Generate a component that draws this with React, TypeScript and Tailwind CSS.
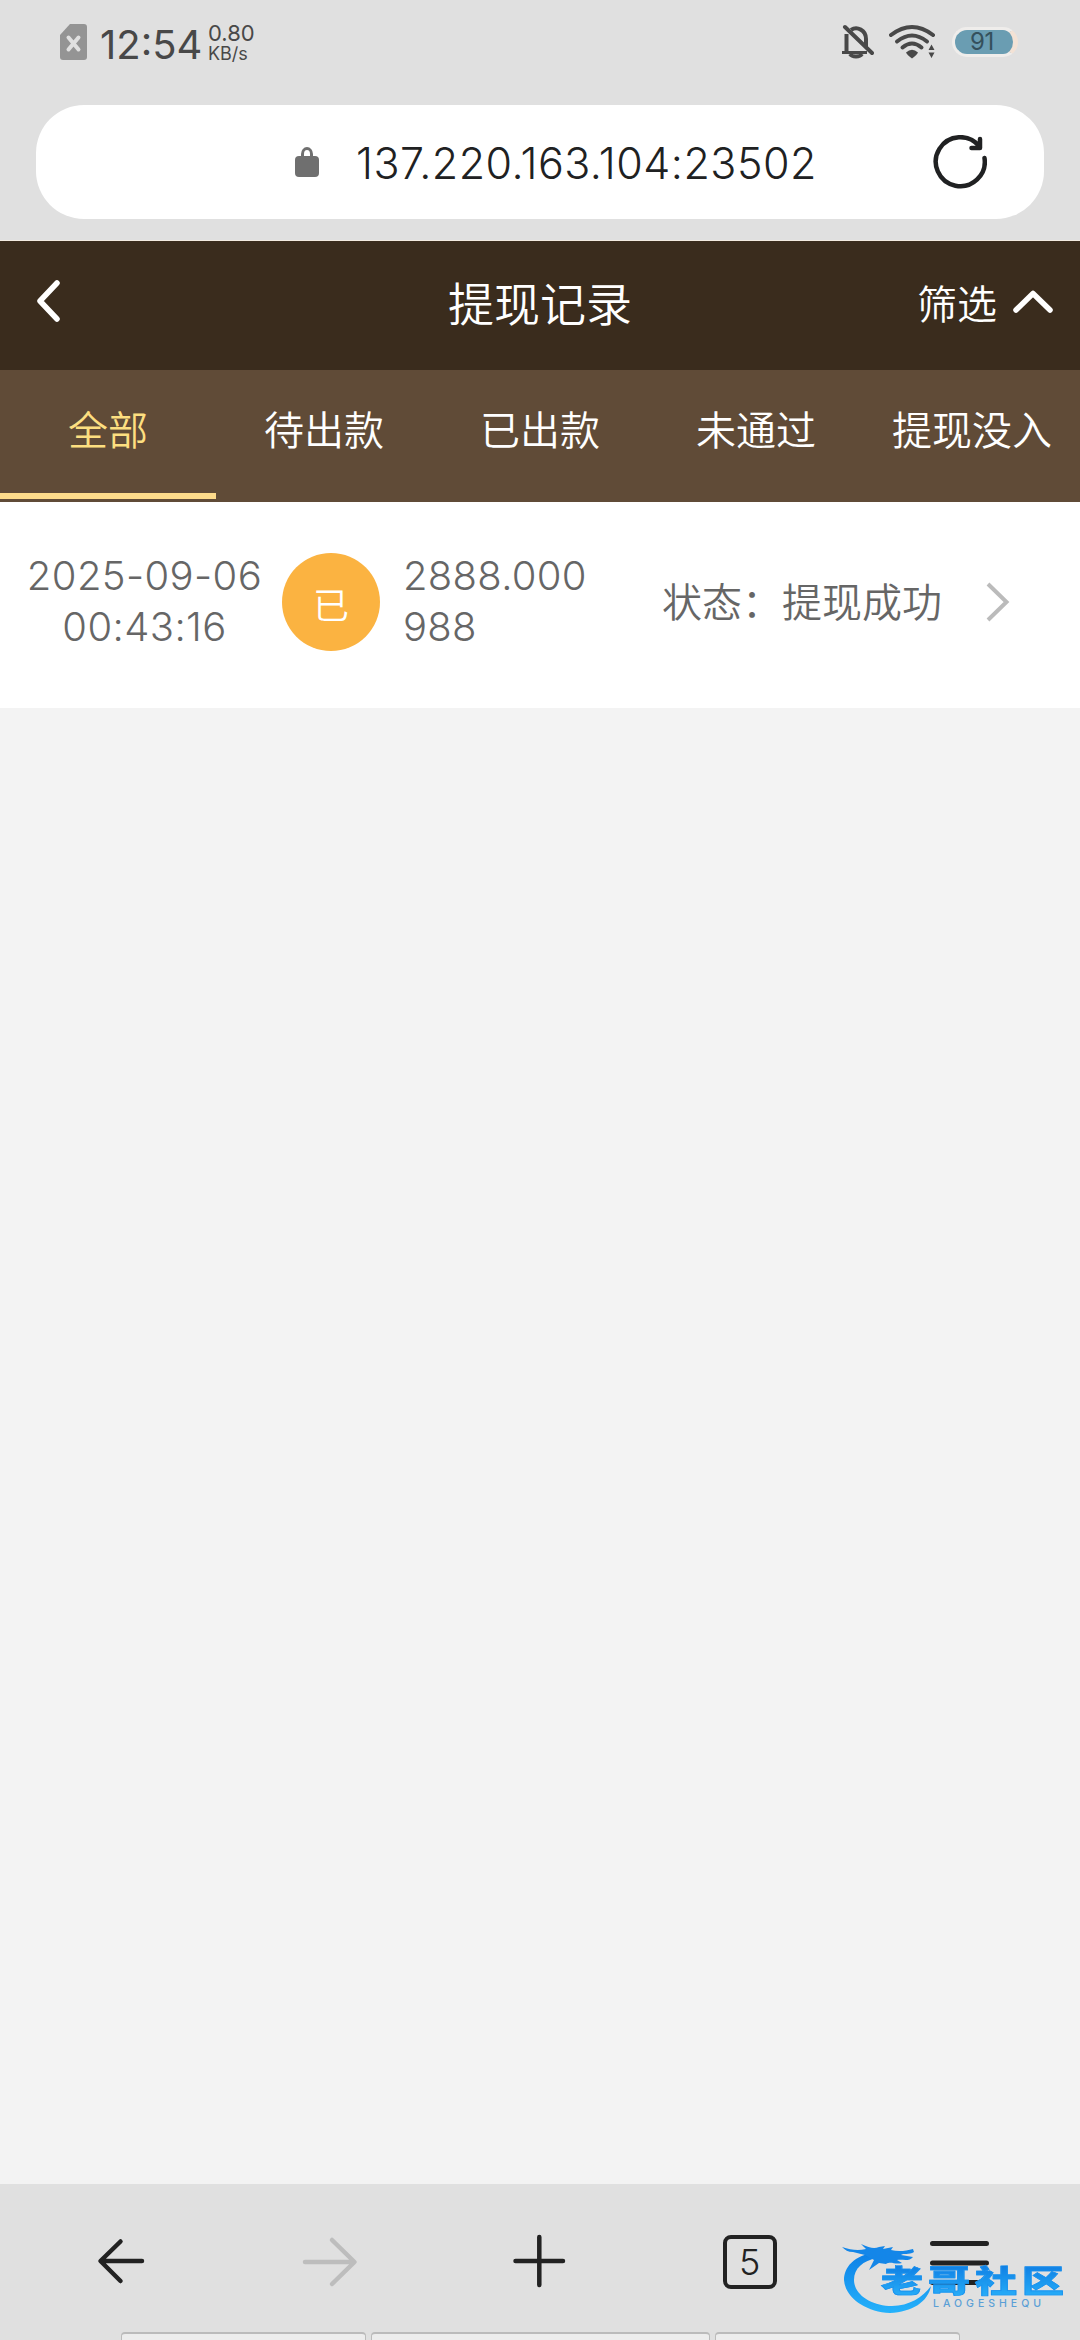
import clsx from "clsx";

const tabs = ["全部", "待出款", "已出款", "未通过", "提现没入"];

function StatusBar() {
  return (
    <div className="flex h-[105px] items-start justify-between pl-[60px] pr-[62px] text-[#484848]">
      <div className="flex items-start">
        {/* missing sim card */}
        <svg className="mt-6" width="27" height="36" viewBox="0 0 27 36">
          <path d="M10 0H24a3 3 0 0 1 3 3V33a3 3 0 0 1-3 3H3a3 3 0 0 1-3-3V11Z" fill="#949494" />
          <path d="M8.5 13.5L18.5 25.5M18.5 13.5L8.5 25.5" stroke="#e0e0e0" strokeWidth="4" strokeLinecap="round" />
        </svg>
        <span className="ml-[13px] mt-[21px] w-[108px] text-[40px] leading-[48px] whitespace-nowrap">12:54</span>
        <div className="mt-[22px] flex flex-col">
          <span className="text-[22px] leading-[23px]">0.80</span>
          <span className="text-[18px] leading-[18px]">KB/s</span>
        </div>
      </div>
      <div className="flex items-start">
        <svg className="mt-6" width="32" height="37" viewBox="0 0 32 37" fill="none" stroke="currentColor" strokeWidth="4">
          <path d="M4.5 10V28M9 6C15 2 24 6 24 15V23" />
          <path d="M0 28.5H25" strokeWidth="3" />
          <path d="M8 30a6.5 4 0 0 0 12 0" />
          <path d="M3 3L30 29" strokeLinecap="round" />
        </svg>
        <svg className="ml-[15px] mt-6" width="48" height="36" viewBox="0 0 48 36" fill="none" stroke="currentColor" strokeWidth="4" strokeLinecap="round">
          <path d="M2 11Q23 -5 44 11" />
          <path d="M8 17.5Q23 5.5 38 17.5" />
          <path d="M13.5 23.5Q23 15.5 32.5 23.5" />
          <path d="M17 28.5Q23 23 29 28.5Q28 31 23 34.5Q18 31 17 28.5Z" fill="currentColor" stroke="none" />
          <path d="M39.5 26L42.5 20.5L45.5 26ZM39.5 28.5L42.5 34L45.5 28.5Z" fill="currentColor" stroke="none" />
        </svg>
        <div className="ml-[15px] mt-[27px] flex h-[30px] w-[66px] items-center rounded-full border-[3px] border-[#efedeb] border-r-[5px] border-r-[#f3e2d5] bg-[#6a9db2] pl-[15px] text-[24px] tracking-[-0.5px] text-[#34505c]">
          91
        </div>
      </div>
    </div>
  );
}

function AddressBar() {
  return (
    <div className="mx-9 flex h-[114px] items-center rounded-[48px] bg-white">
      <svg className="ml-[259px]" width="24" height="30" viewBox="0 0 24 30">
        <path d="M7.5 11V7a4.5 5.5 0 0 1 9 0V11" fill="none" stroke="#6f6f6f" strokeWidth="3" />
        <rect y="9" width="24" height="21" rx="4" fill="#6f6f6f" />
      </svg>
      <span className="ml-[37px] w-[577px] pt-[3px] text-[43px] font-light tracking-[0.5px] text-[#202122]">137.220.163.104:23502</span>
      <svg width="54" height="54" viewBox="0 0 54 54" fill="none" stroke="#202122" strokeWidth="4.5" strokeLinecap="round" strokeLinejoin="round">
        <path d="M51.5 23A24.5 24.5 0 1 1 46.5 11.5" />
        <path d="M47 4V13H38.5" />
      </svg>
    </div>
  );
}

function PageHeader() {
  return (
    <header className="flex h-[130px] items-center border-t border-[#f3ebe0] bg-[#3a2c1d] pb-1 text-white">
      <div className="flex w-[448px] items-center pl-[36px]">
        <svg className="mb-[6px]" width="24" height="42" viewBox="0 0 24 42" fill="none" stroke="currentColor" strokeWidth="5.5" strokeLinecap="round" strokeLinejoin="round">
          <path d="M21 3L4 21L21 39" />
        </svg>
      </div>
      <h1 className="text-[46px] leading-none font-[350]">提现记录</h1>
      <div className="flex flex-1 items-center justify-end pr-[27px] text-[40px] leading-none font-[350]">
        <span className="pt-[3px]">筛选</span>
        <svg className="mb-[3px] ml-4" width="40" height="24" viewBox="0 0 40 24" fill="none" stroke="currentColor" strokeWidth="5.5" strokeLinecap="round" strokeLinejoin="round">
          <path d="M3 20L20 3.5L37 20" />
        </svg>
      </div>
    </header>
  );
}

function Tabs() {
  return (
    <nav className="flex h-[132px] bg-[#604b37] pb-[3px] text-[40px] font-[350]">
      {tabs.map((tab, i) => (
        <div
          key={tab}
          className={clsx(
            "flex w-[216px] items-center justify-center border-b-[6px] pb-0.5 whitespace-nowrap",
            i === 0 ? "border-[#fddb8b] text-[#fddf80]" : "border-transparent text-white",
          )}
        >
          {tab}
        </div>
      ))}
    </nav>
  );
}

function Record() {
  return (
    <div className="flex h-[206px] bg-white text-[40px] leading-[51px] font-light text-[#666]">
      <div className="ml-5 mt-12 w-[249px] text-center tracking-[0.4px] whitespace-nowrap">
        2025-09-06
        <br />
        00:43:16
      </div>
      <div className="ml-[13px] mt-[51px] flex size-[98px] items-center justify-center rounded-full bg-[#fbb341] pt-2 text-[36px] font-[350] text-white">
        已
      </div>
      <div className="ml-[23px] mt-12 w-[259px] tracking-[0.3px]">
        2888.000
        <br />
        988
      </div>
      <div className="mt-[75px] w-[324px] font-[350]">状态：提现成功</div>
      <svg className="mt-[80px]" width="24" height="40" viewBox="0 0 24 40" fill="none" stroke="#bbb" strokeWidth="4">
        <path d="M2 2L20.5 20L2 38" />
      </svg>
    </div>
  );
}

// Site logo laid over the bottom right corner
function Watermark() {
  return (
    <div className="absolute top-[55px] left-[841px] h-[80px] w-[230px]">
      <svg className="absolute inset-0" width="230" height="80" viewBox="0 0 230 80">
        <defs>
          <linearGradient id="ring" x1="0" y1="0" x2="0" y2="1">
            <stop offset="0" stopColor="#0c7fe6" />
            <stop offset="1" stopColor="#25b2fb" />
          </linearGradient>
        </defs>
        <path d="M36 13C12 16 3 29 3 41C4 58 24 73 49 74C71 73 87 63 90 47C82 58 68 67 51 67C31 67 13 56 13 41C13 29 22 22 36 19Z" fill="url(#ring)" />
        <path d="M1 8C10 11 17 12 25 10L20 5C29 9 33 10 38 8L44 7L42 10L52 8L50 11C57 13 65 12 72 10L73 13C68 16 62 14 60 16L72 18C68 23 62 20 56 21L61 24C54 26 50 22 45 25L38 24L28 31L33 21L24 16L12 13C7 13 4 11 1 8Z" fill="#1486e8" />
      </svg>
      <span className="absolute top-[27px] left-[40px] origin-top scale-y-[0.72] bg-linear-to-b from-[#1180e4] to-[#27adf8] bg-clip-text text-[42px] leading-[42px] font-black tracking-[5px] whitespace-nowrap text-transparent [-webkit-text-stroke:1px_#1c92ee]">
        老哥社区
      </span>
      <span className="absolute top-[59px] left-[92px] text-[10.5px] leading-[11px] font-medium tracking-[4px] text-[#5a9fd6]">LAOGESHEQU</span>
    </div>
  );
}

function BottomBar() {
  return (
    <footer className="relative flex h-[156px] flex-col bg-[#e0e0e0] text-[#222]">
      <div className="grid h-[148px] grid-cols-5 place-items-center px-4 pt-[8px]">
        <svg width="60" height="60" viewBox="0 0 60 60" fill="none" stroke="currentColor" strokeWidth="4.5" strokeLinecap="round" strokeLinejoin="round">
          <path d="M51 29H10M29.5 9.5L9.5 29L29.5 49" />
        </svg>
        <svg className="text-[#bdbdbd]" width="60" height="60" viewBox="0 0 60 60" fill="none" stroke="currentColor" strokeWidth="4.5" strokeLinecap="round" strokeLinejoin="round">
          <path d="M5 30H54M32 8L54.5 30L32 52" />
        </svg>
        <svg width="60" height="60" viewBox="0 0 60 60" fill="none" stroke="currentColor" strokeWidth="4.5" strokeLinecap="round">
          <path d="M5.5 29H53M29.3 5V53" />
        </svg>
        <div className="flex size-[54px] items-center justify-center rounded-[8px] border-[4.5px] border-current text-[36px] font-light">5</div>
        <svg width="60" height="60" viewBox="0 0 60 60" fill="none" stroke="currentColor" strokeWidth="5" strokeLinecap="round">
          <path d="M3.5 11.5H57.5M3.5 31H57.5M3.5 50.5H57.5" />
        </svg>
      </div>
      {/* tops of the cards behind the bar */}
      <div className="flex h-2 gap-[5px] pl-[121px]">
        <div className="w-[245px] rounded-t border-x border-t-2 border-[#bbb] bg-[#ededed]" />
        <div className="w-[339px] rounded-t border-x border-t-2 border-[#bbb] bg-[#ededed]" />
        <div className="w-[245px] rounded-t border-x border-t-2 border-[#bbb] bg-[#ededed]" />
      </div>
      <Watermark />
    </footer>
  );
}

export default function App() {
  return (
    <div className="flex h-[2340px] w-[1080px] flex-col overflow-hidden bg-[#f3f3f3] font-[Inter,'Noto_Sans_CJK_SC',sans-serif]">
      <div className="h-[240px] bg-[#e0e0e0]">
        <StatusBar />
        <AddressBar />
      </div>
      <PageHeader />
      <Tabs />
      <Record />
      <div className="flex-1" />
      <BottomBar />
    </div>
  );
}
